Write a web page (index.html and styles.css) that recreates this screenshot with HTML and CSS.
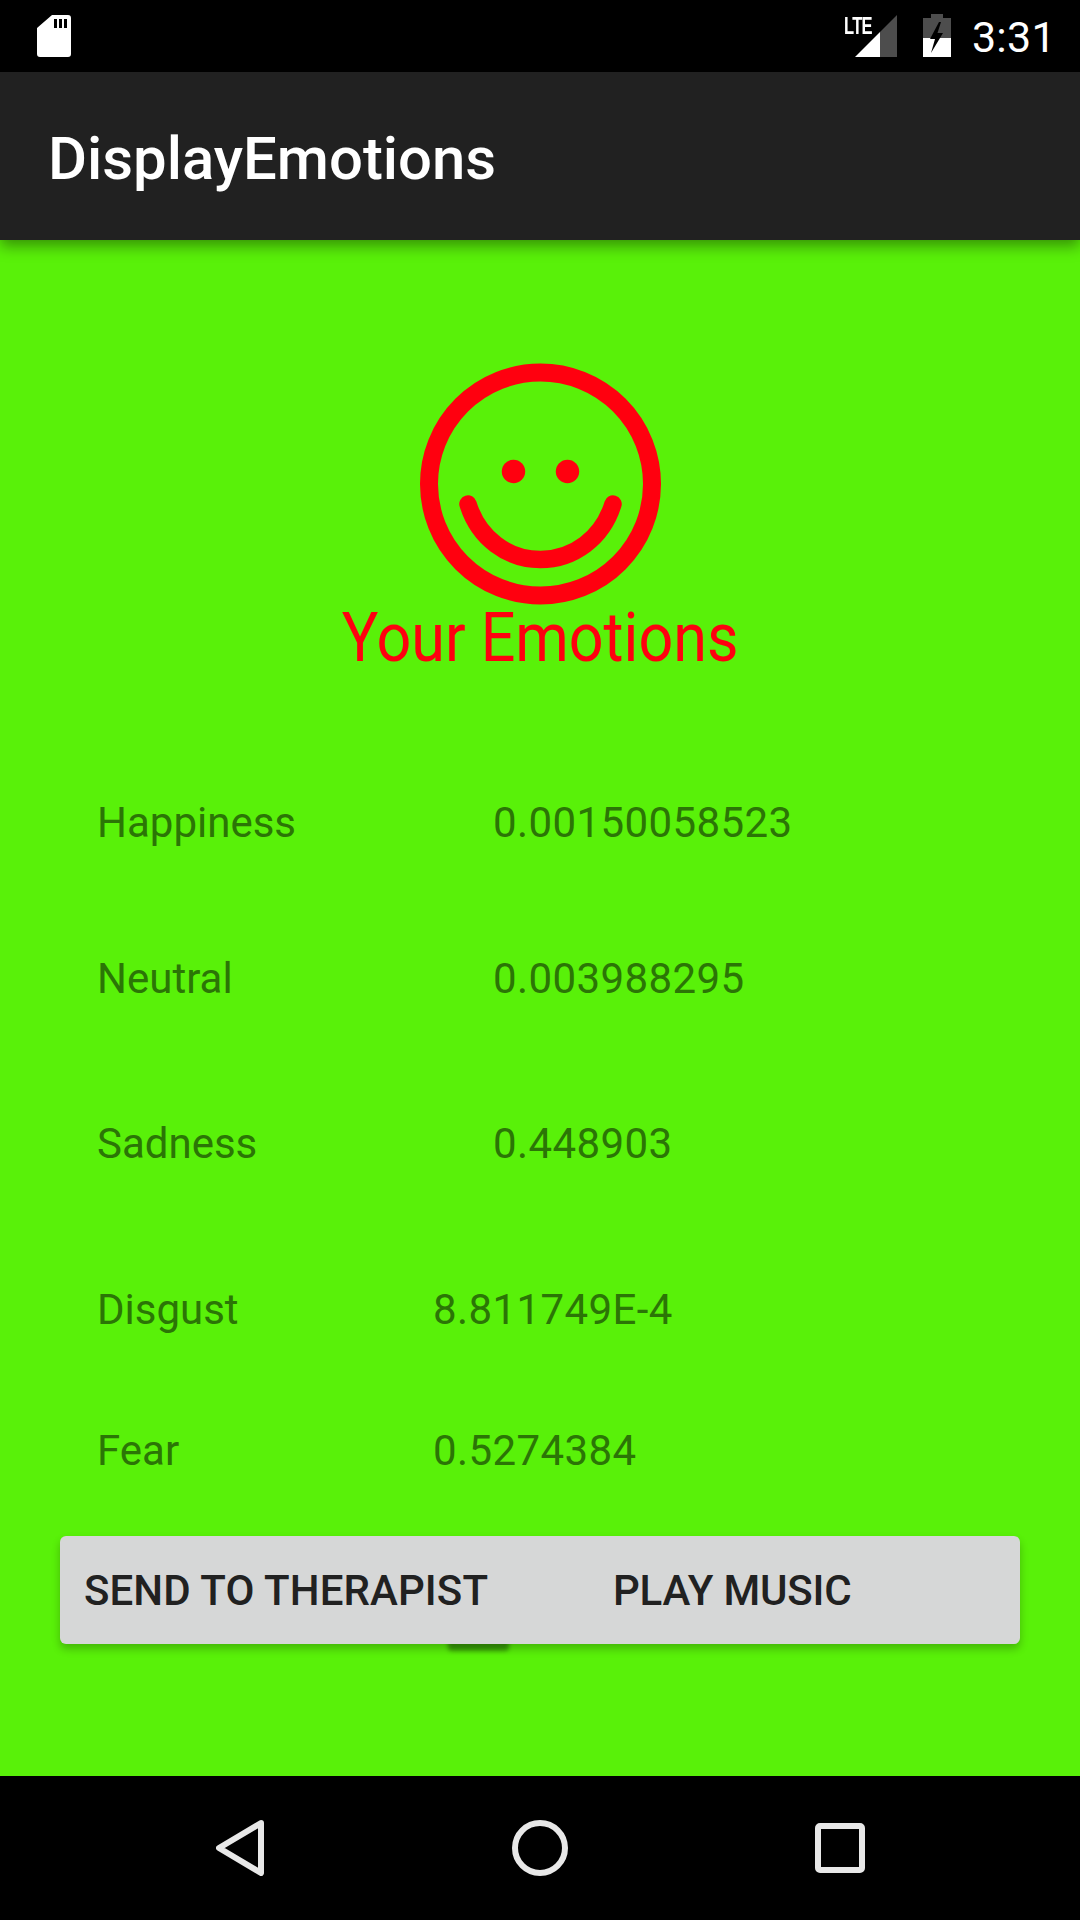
FILE: index.html
```html
<!DOCTYPE html>
<html lang="en">
<head>
<meta charset="utf-8">
<title>DisplayEmotions</title>
<link rel="stylesheet" href="styles.css">
</head>
<body>
<div class="screen">
  <header class="status-bar">
    <svg class="sd-icon" width="34" height="42" viewBox="0 0 34 42"><path fill="#fff" fill-rule="evenodd" d="M15 0H31a3 3 0 0 1 3 3V39a3 3 0 0 1-3 3H3a3 3 0 0 1-3-3V13ZM17 4V13H20V4ZM22 4V13H25V4ZM27 4V13H30V4Z"/></svg>
    <div class="status-right">
      <div class="signal">
        <span class="lte">LTE</span>
        <svg width="42" height="42" viewBox="0 0 42 42"><path fill="#4d4d4d" d="M25 17 42 0V42H25Z"/><path fill="#fff" d="M0 42 25 17V42Z"/></svg>
      </div>
      <svg class="battery" width="28" height="43" viewBox="0 0 28 43"><path fill="#4d4d4d" d="M8 0H20V4H28V24H0V4H8Z"/><path fill="#fff" d="M0 24H28V43H0Z"/><path fill="#000" d="M16 8 7 25H12L8 39 20 19H14.500L18 8Z"/></svg>
      <span class="clock">3:31</span>
    </div>
  </header>
  <div class="app-bar"><h1 class="app-title">DisplayEmotions</h1></div>
  <main class="content">
    <svg class="smiley" width="242" height="242" viewBox="0 0 242 242">
      <circle cx="120.500" cy="121" r="111.500" fill="none" stroke="#ff000f" stroke-width="18"/>
      <circle cx="93.500" cy="108.500" r="11.700" fill="#ff000f"/>
      <circle cx="147.500" cy="108.500" r="11.700" fill="#ff000f"/>
      <path d="M48 141C58.500 175 87.500 196.500 120.500 196.500S182.500 175 193 141" fill="none" stroke="#ff000f" stroke-width="17.500" stroke-linecap="round"/>
    </svg>
    <h2 class="headline"><span class="headline-text">Your Emotions</span></h2>
    <div class="rows">
      <div class="row row-happiness"><span class="label label-wide">Happiness</span><span class="value">0.00150058523</span></div>
      <div class="row row-neutral"><span class="label label-wide">Neutral</span><span class="value">0.003988295</span></div>
      <div class="row row-sadness"><span class="label label-wide">Sadness</span><span class="value">0.448903</span></div>
      <div class="row row-disgust"><span class="label label-narrow">Disgust</span><span class="value">8.811749E-4</span></div>
      <div class="row row-fear"><span class="label label-narrow">Fear</span><span class="value">0.5274384</span></div>
    </div>
    <div class="actions">
      <span class="hidden-button"></span>
      <button class="action action-send" type="button">SEND TO THERAPIST</button>
      <button class="action action-play" type="button">PLAY MUSIC</button>
    </div>
  </main>
  <nav class="nav-bar">
    <svg class="nav-icon" width="48" height="56" viewBox="0 0 48 56"><path d="M45 3 3 28 45 53Z" fill="none" stroke="#e8e8e8" stroke-width="6" stroke-linejoin="round"/></svg>
    <svg class="nav-icon" width="56" height="56" viewBox="0 0 56 56"><circle cx="28" cy="28" r="25" fill="none" stroke="#e8e8e8" stroke-width="6"/></svg>
    <svg class="nav-icon" width="50" height="50" viewBox="0 0 50 50"><rect x="3" y="3" width="44" height="44" rx="2" fill="none" stroke="#e8e8e8" stroke-width="6"/></svg>
  </nav>
</div>
</body>
</html>
```
FILE: styles.css
```css
* { box-sizing: border-box; }
html, body { margin: 0; padding: 0; }
body { font-family: Roboto, "Liberation Sans", sans-serif; background: #000; }
.screen { width: 1080px; height: 1920px; display: flex; flex-direction: column; overflow: hidden; }

.status-bar { height: 72px; flex: none; background: #000; display: flex; justify-content: space-between; align-items: flex-start; padding: 15px 24px 0 37px; }
.status-right { display: flex; align-items: flex-start; }
.signal { position: relative; width: 53px; height: 42px; display: flex; justify-content: flex-end; }
.lte { position: absolute; left: 0; top: -1px; color: #fff; font: 700 23px/24px "Liberation Sans", sans-serif; letter-spacing: -1px; transform: scaleX(.72); transform-origin: left top; }
.battery { margin: -1px 0 0 26px; }
.clock { margin: -1px 0 0 21px; color: #fff; font-size: 43px; line-height: 46px; font-weight: 400; letter-spacing: .3px; }

.app-bar { height: 168px; flex: none; background: #212121; display: flex; align-items: center; padding: 5px 0 0 48px; position: relative; z-index: 1; box-shadow: 0 6px 14px rgba(0,0,0,.4); }
.app-title { margin: 0; color: #fff; font-size: 60px; font-weight: 500; line-height: 80px; transform: scaleX(.997); transform-origin: left center; }

.content { flex: 1; background: #59f109; display: flex; flex-direction: column; padding-top: 123px; isolation: isolate; }
.smiley { display: block; flex: none; margin: 0 auto 0 420px; }
.headline { margin: -3px 0 0; text-align: center; height: 75px; color: #ff000f; font-size: 68px; line-height: 72px; font-weight: 400; }
.headline-text { display: inline-block; transform: scaleX(.897); }

.rows { display: flex; flex-direction: column; padding-left: 97px; margin-top: 121px; }
.row { display: flex; height: 50px; align-items: center; color: #2b7506; font-size: 42px; line-height: 50px; }
.row-neutral { margin-top: 106px; }
.row-sadness { margin-top: 115px; }
.row-disgust { margin-top: 116px; }
.row-fear { margin-top: 91px; }
.label { flex: none; }
.label-wide { width: 396px; }
.label-narrow { width: 336px; }
.value { letter-spacing: .4px; }

.actions { position: relative; margin: 60px 60px 0; height: 108px; background: #d6d7d7; border-radius: 6px; box-shadow: 0 5px 8px rgba(0,0,0,.24); display: flex; align-items: center; }
.hidden-button { position: absolute; z-index: -1; left: 388px; top: 100px; width: 61px; height: 15px; background: #369a05; border-radius: 4px; filter: blur(2px); }
.action { padding: 0; border: 0; background: none; color: #212121; font-family: Roboto, sans-serif; font-size: 42px; font-weight: 500; white-space: nowrap; }
.action-send { margin-left: 24px; letter-spacing: .1px; }
.action-play { position: absolute; left: 553px; letter-spacing: -.2px; }

.nav-bar { height: 144px; flex: none; background: #000; display: flex; align-items: center; position: relative; padding-left: 216px; }
.nav-icon { flex: none; }
.nav-icon + .nav-icon { margin-left: 248px; }
.nav-icon + .nav-icon + .nav-icon { margin-left: 247px; }
```
